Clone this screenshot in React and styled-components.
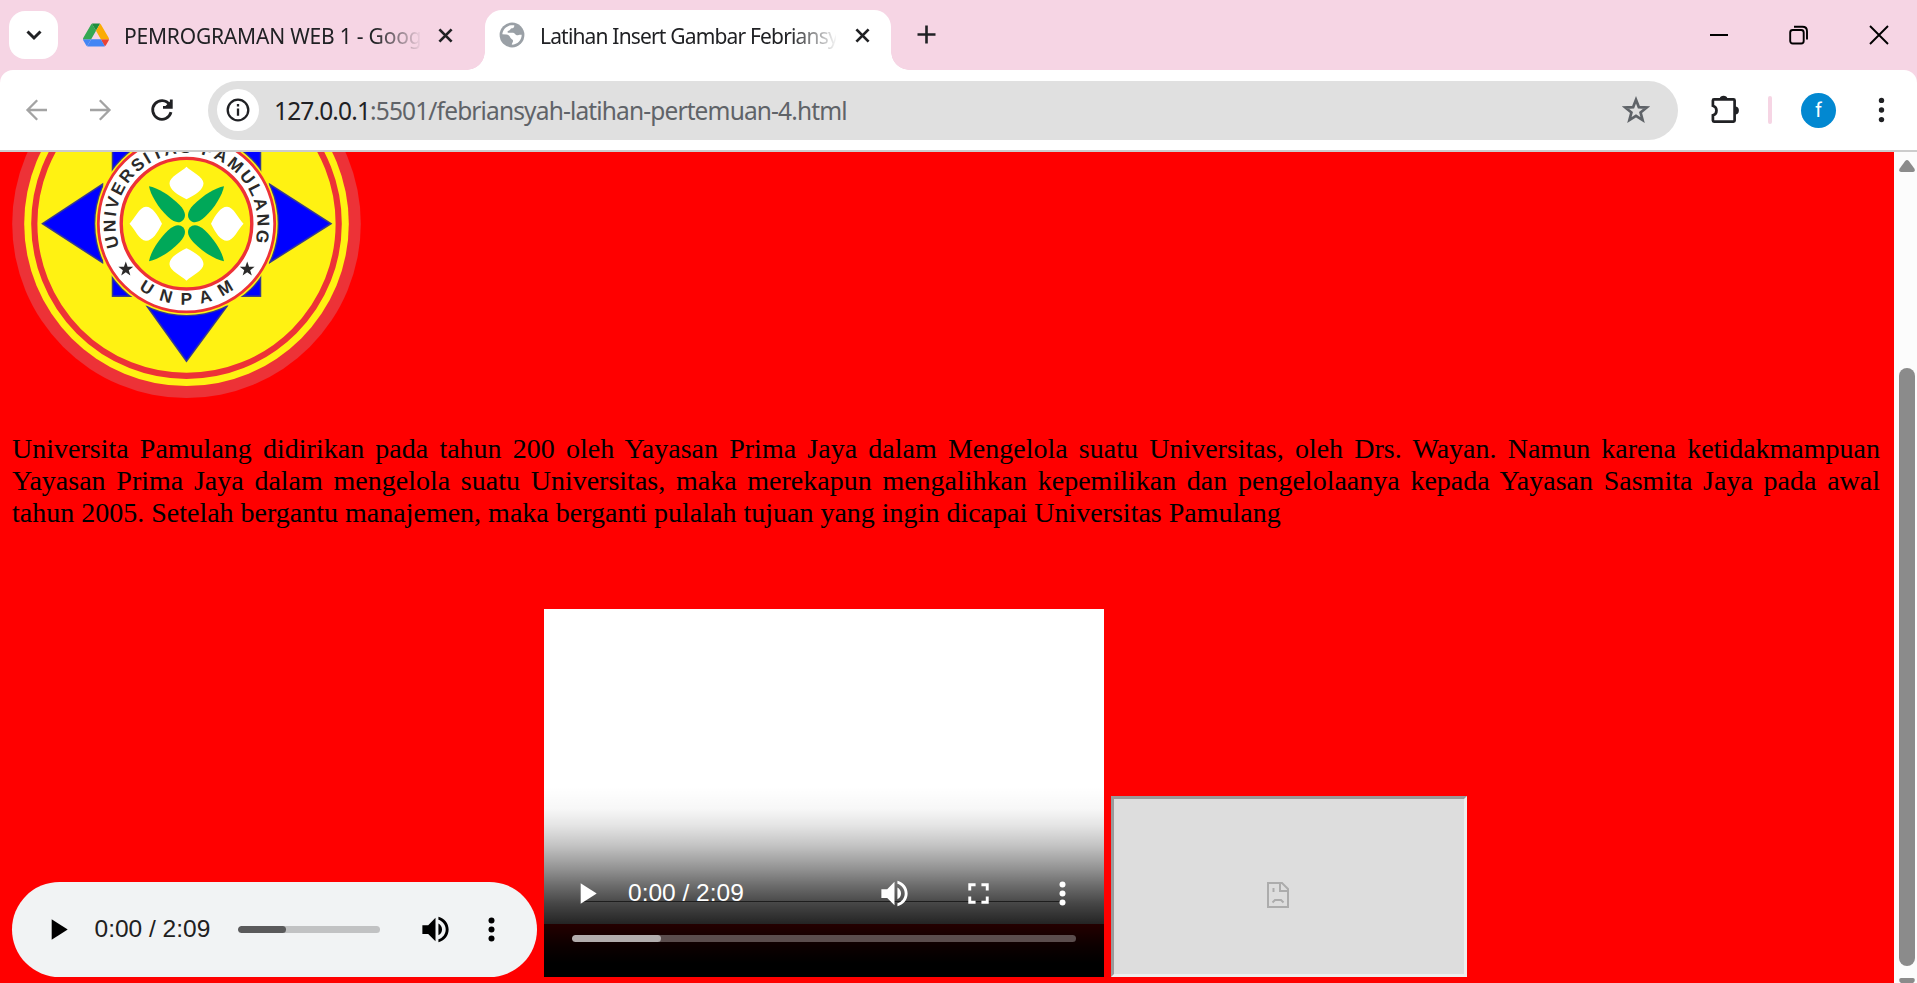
import React from "react";
import styled, { createGlobalStyle } from "styled-components";

const Global = createGlobalStyle`
  * { box-sizing: border-box; }
  html, body { margin: 0; padding: 0; overflow: hidden; }
  svg { display: block; flex: none; }
`;

const Window = styled.div`
  width: 1917px;
  height: 983px;
  display: flex;
  flex-direction: column;
  overflow: hidden;
  background: #f6d5e4;
  font-family: "Noto Sans", "Open Sans", sans-serif;
`;

const TabStrip = styled.div`
  height: 70px;
  flex: none;
  display: flex;
  align-items: flex-start;
  padding-left: 9px;
`;

const TabSearch = styled.button`
  width: 49px;
  height: 48px;
  margin-top: 11px;
  border: 0;
  padding: 0;
  border-radius: 16px;
  background: #fff;
  display: grid;
  place-items: center;
`;

const Tab = styled.div`
  position: relative;
  display: flex;
  align-items: center;
  width: ${(p) => p.$width}px;
  height: 60px;
  margin-top: 10px;
  padding: 0 ${(p) => p.$padRight}px 10px ${(p) => p.$padLeft}px;
  background: ${(p) => (p.$active ? "#fff" : "transparent")};
  border-radius: 17px 17px 0 0;
  ${(p) =>
    p.$active &&
    `
    &::before, &::after {
      content: "";
      position: absolute;
      bottom: 0;
      width: 18px;
      height: 18px;
    }
    &::before {
      left: -18px;
      background: radial-gradient(circle at 0 0, transparent 17.5px, #fff 18px);
    }
    &::after {
      right: -18px;
      background: radial-gradient(circle at 100% 0, transparent 17.5px, #fff 18px);
    }
  `}
`;

const TabTitle = styled.span`
  width: 296px;
  margin: 2px auto 0 15px;
  font-size: 21px;
  line-height: 30px;
  letter-spacing: ${(p) => p.$spacing}px;
  white-space: nowrap;
  color: #202124;
  mask-image: linear-gradient(to right, #000 250px, transparent 298px);
`;

const NewTab = styled.div`
  margin: 25px 0 0 26px;
`;

const WindowButtons = styled.div`
  margin-left: auto;
  padding: 25px 28px 0 0;
  display: flex;
  gap: 60px;
`;

const Toolbar = styled.div`
  height: 82px;
  flex: none;
  display: flex;
  align-items: center;
  padding: 0 31px 0 24px;
  background: #fff;
  border-bottom: 2px solid #ccc;
  border-radius: 13px 13px 0 0;
`;

const NavButtons = styled.div`
  display: flex;
  gap: 36.5px;
  width: 184px;
`;

const AddressBar = styled.div`
  width: 1470px;
  height: 59px;
  border-radius: 30px;
  background: #e0e0e0;
  display: flex;
  align-items: center;
  padding: 0 28px 0 9px;
`;

const SiteInfo = styled.span`
  width: 42px;
  height: 42px;
  border-radius: 50%;
  background: #fff;
  display: grid;
  place-items: center;
`;

const Url = styled.span`
  margin: 2px auto 0 15px;
  font-size: 24.5px;
  line-height: 34px;
  letter-spacing: -0.86px;
  white-space: nowrap;
  color: #5f6368;
`;

const Host = styled.span`
  color: #202124;
`;

const ToolbarEnd = styled.div`
  flex: 1;
  display: flex;
  align-items: center;
  padding-left: 32px;
`;

const Divider = styled.span`
  width: 4px;
  height: 28px;
  border-radius: 2px;
  margin-left: 28px;
  background: #f6d5e4;
`;

const Avatar = styled.span`
  width: 35px;
  height: 35px;
  border-radius: 50%;
  margin: 0 auto 0 29px;
  background: #0288d1;
  color: #fff;
  font: 20px/35px Roboto, sans-serif;
  text-align: center;
`;

const Viewport = styled.div`
  flex: 1;
  min-height: 0;
  display: flex;
`;

const Page = styled.main`
  width: 1894px;
  padding: 0 14px 0 12px;
  background: #f00;
  overflow: hidden;
`;

const Paragraph = styled.p`
  margin: 34px 0 80px;
  font: 28px/32px "Liberation Serif", "Times New Roman", serif;
  text-align: justify;
  color: #000;
`;

const MediaRow = styled.div`
  display: flex;
  align-items: flex-end;
  gap: 7px;
`;

const AudioPlayer = styled.div`
  width: 525px;
  height: 95px;
  border-radius: 48px;
  background: #f1f3f4;
  display: flex;
  align-items: center;
  padding: 0 28px 0 28px;
`;

const Time = styled.span`
  font: 24.5px/30px "Liberation Sans", Arial, sans-serif;
  white-space: nowrap;
  color: ${(p) => (p.$light ? "#fff" : "#202020")};
`;

const AudioTime = styled(Time)`
  margin: 0 27.5px 2px 19.5px;
`;

const Track = styled.div`
  width: ${(p) => p.$width}px;
  height: 7px;
  border-radius: 4px;
  overflow: hidden;
  background: ${(p) => p.$rest};
`;

const Buffered = styled.div`
  width: ${(p) => p.$width}px;
  height: 100%;
  border-radius: 4px;
  background: ${(p) => p.$fill};
`;

const AudioButtons = styled.div`
  margin-left: auto;
  display: flex;
  gap: 21px;
`;

const VideoPlayer = styled.div`
  position: relative;
  width: 560px;
  height: 368px;
  display: flex;
  flex-direction: column;
  justify-content: flex-end;
  padding: 0 28px 35px 28px;
  background:
    linear-gradient(
      to bottom,
      rgba(0, 0, 0, 0) 178px,
      rgba(0, 0, 0, 0.03) 200px,
      rgba(0, 0, 0, 0.1) 216px,
      rgba(0, 0, 0, 0.23) 236px,
      rgba(0, 0, 0, 0.42) 259px,
      rgba(0, 0, 0, 0.58) 277px,
      rgba(0, 0, 0, 0.73) 295px,
      rgba(0, 0, 0, 0.86) 315px,
      rgba(0, 0, 0, 0.95) 336px,
      rgba(0, 0, 0, 1) 354px
    ),
    linear-gradient(to bottom, #fff 315px, #f00 315px);
`;

const Hairline = styled.span`
  position: absolute;
  left: 38px;
  right: 42px;
  top: 292px;
  height: 1px;
  background: #1e1e1e;
`;

const VideoControls = styled.div`
  position: relative;
  height: 35px;
  display: flex;
  align-items: center;
  margin: 0 -4px 24px -3px;
`;

const VideoTime = styled(Time)`
  margin: 0 auto 2px 24px;
`;

const VideoButtons = styled.div`
  display: flex;
  gap: 49px;
`;

const BrokenFrame = styled.div`
  width: 356px;
  height: 181px;
  border: 3px solid;
  border-color: #9a9a9a #eee #eee #9a9a9a;
  background: #ddd;
  display: grid;
  place-items: center;
  padding: 17px 22px 0 0;
`;

const Scrollbar = styled.div`
  width: 23px;
  height: 831px;
  background: #fcfcfc;
  display: flex;
  flex-direction: column;
  align-items: center;
  padding: 8px 2px 0 5px;
  overflow: hidden;
`;

const Thumb = styled.div`
  width: 16px;
  height: 598px;
  flex: none;
  margin: 196px 0 12px;
  border-radius: 8px;
  background: #8b8b8b;
`;

const CloseX = () => (
  <svg width="15" height="15" viewBox="0 0 16 16" stroke="#202124" strokeWidth="2.9">
    <path d="M1.500 1.500 14.500 14.500M14.500 1.500 1.500 14.500" />
  </svg>
);

const DriveIcon = () => (
  <svg width="26" height="24" viewBox="0 0 87.3 78">
    <path d="m6.6 66.85 3.85 6.65c.8 1.4 1.95 2.5 3.3 3.3l13.75-23.8h-27.5c0 1.55.4 3.1 1.2 4.5z" fill="#4285f4" />
    <path d="m43.65 25-13.75-23.8c-1.35.8-2.5 1.9-3.3 3.3l-25.4 44a9.06 9.06 0 0 0 -1.2 4.5h27.5z" fill="#34a853" />
    <path d="m73.55 76.8c1.35-.8 2.5-1.9 3.3-3.3l1.6-2.75 7.65-13.25c.8-1.4 1.2-2.95 1.2-4.5h-27.5l5.85 11.5z" fill="#ea4335" />
    <path d="m43.65 25 13.75-23.8c-1.35-.8-2.9-1.2-4.5-1.2h-18.5c-1.6 0-3.15.45-4.5 1.2z" fill="#1e8e3e" />
    <path d="m59.8 53h-32.3l-13.75 23.8c1.35.8 2.9 1.2 4.5 1.2h50.8c1.6 0 3.15-.45 4.5-1.2z" fill="#4285f4" />
    <path d="m73.4 26.5-12.7-22c-.8-1.4-1.95-2.5-3.3-3.3l-13.75 23.8 16.15 28h27.45c0-1.55-.4-3.1-1.2-4.5z" fill="#fbac04" />
  </svg>
);

const GlobeIcon = () => (
  <svg width="26" height="26" viewBox="0 0 26 26">
    <circle cx="13" cy="13" r="12.4" fill="#9aa0a6" />
    <path
      d="M3.300 12.200C3.800 7.500 7.500 3.800 12 3.300H15.200C15.600 5.200 14.200 6.200 12.600 6.300C11.200 6.600 11.400 8.400 9.600 8.700C8 9 8.300 10.800 9.600 10.800H14.200C16 11.200 16.200 13.200 17.800 13.300C19.500 13.400 20 12.600 22.700 12.800C22.700 18.200 18.500 22.600 12.800 22.700C12.800 20.800 14.200 20.200 14 18.600C13.800 17.200 12 17.200 11.400 15.800C10.800 14 9.500 12.800 7.500 12.600Z"
      fill="#fff"
    />
  </svg>
);

const Arrow = ({ flip }) => (
  <svg width="26" height="26" viewBox="0 0 26 26" fill="none" stroke="#a3a3a3" strokeWidth="2.3">
    <path
      transform={flip ? "matrix(-1 0 0 1 26 0)" : undefined}
      d="M23 13H4M13.200 3.300 3.500 13 13.200 22.700"
    />
  </svg>
);

const ReloadIcon = () => (
  <svg width="26" height="26" viewBox="0 0 26 26" fill="none" stroke="#202124" strokeWidth="2.8">
    <path d="M22 15.200A9.300 9.300 0 1 1 20.600 7.600" />
    <path d="M22.300 2.400V10.300H14" />
    <path d="M16.500 8.900H21V4.500Z" fill="#202124" stroke="none" />
  </svg>
);

const Dots = ({ color, r = 3, step = 9, width = 35, height = 35 }) => (
  <svg width={width} height={height} fill={color}>
    {[-1, 0, 1].map((n) => (
      <circle key={n} cx={width / 2} cy={height / 2 + n * step} r={r} />
    ))}
  </svg>
);

const PuzzleIcon = () => (
  <svg width="30" height="30" viewBox="0 0 30 30">
    <path
      d="M4 4.300H23.500Q24.600 4.300 24.600 5.400V25.500Q24.600 26.600 23.500 26.600H4Q2.900 26.600 2.900 25.500V20.300A5 5 0 0 0 2.900 10.700V5.400Q2.900 4.300 4 4.300Z"
      fill="none"
      stroke="#202124"
      strokeWidth="2.700"
    />
    <path d="M9.700 3.500A3.900 3.300 0 0 1 17.400 3.500ZM25 11.400A3.900 4 0 0 1 25 19.400Z" fill="#202124" />
  </svg>
);

const Play = ({ color }) => (
  <svg width="35" height="35" viewBox="0 0 24 24" fill={color}>
    <path d="M8 5v14l11-7z" />
  </svg>
);

const Volume = ({ color }) => (
  <svg width="35" height="35" viewBox="0 0 24 24" fill={color}>
    <path d="M3 9v6h4l5 5V4L7 9H3zm13.500 3c0-1.770-1.020-3.290-2.500-4.030v8.050c1.480-.730 2.500-2.250 2.500-4.020zM14 3.230v2.060c2.890.860 5 3.540 5 6.710s-2.110 5.850-5 6.710v2.060c4.010-.910 7-4.490 7-8.770s-2.990-7.860-7-8.770z" />
  </svg>
);

const Fullscreen = () => (
  <svg width="35" height="35" viewBox="0 0 24 24" fill="#fff">
    <path d="M7 14H5v5h5v-2H7v-3zm-2-4h2V7h3V5H5v5zm12 7h-3v2h5v-5h-2v3zM14 5v2h3v3h2V5h-5z" />
  </svg>
);

const SadPage = () => (
  <svg width="22" height="26" viewBox="0 0 22 26" fill="none" stroke="#acacac" strokeWidth="2">
    <path d="M15 1H1V25H21V7Z" />
    <path d="M13 1V9H21" />
    <path d="M6.500 6V10" />
    <path d="M5.500 20.500 8 18H14L16.500 20.500" />
  </svg>
);

const starPoints = (cx, cy, r, inner = 0.4) =>
  Array.from({ length: 10 }, (_, i) => {
    const a = (Math.PI / 5) * i - Math.PI / 2;
    const k = i % 2 ? r * inner : r;
    return `${cx + k * Math.cos(a)},${cy + k * Math.sin(a)}`;
  }).join(" ");

const Crest = () => (
  <svg width="350" height="247" viewBox="-174.5 -71.7 350 247">
    <defs>
      <path id="arcTop" d="M-67.300 22.800A71 71 0 1 1 67.900 21" />
      <path id="arcBottom" d="M-47.800 65.400A81 81 0 0 0 47.800 65.400" />
      <clipPath id="blueShapes">
        <path d="M-74.500 -74H74.500V73H-74.500ZM-144.500 0 -84 -40V40ZM144.500 0 83 -40V40ZM0 138.500 -40 82H41Z" />
      </clipPath>
    </defs>
    <circle r="174.300" fill="#ed3237" />
    <circle r="162.300" fill="#fff212" />
    <circle r="152.200" fill="none" stroke="#ed3237" strokeWidth="6.200" />
    <g fill="#00f" stroke="#373b8c" strokeWidth="1.500">
      <rect x="-74" y="-74" width="148" height="146.500" />
      <path d="M-144 0 -84 -39.500V39ZM144.500 0 83 -39.500V39ZM0 137.500 -39.500 82.500H40.500Z" />
    </g>
    <circle r="92.500" fill="#373b8c" clipPath="url(#blueShapes)" />
    <circle r="91.200" fill="#fff212" />
    <circle r="88.200" fill="#fff" stroke="#ed3237" strokeWidth="2.800" />
    <circle r="65.300" fill="#fff212" stroke="#ed3237" strokeWidth="3.400" />
    {[0, 90, 180, 270].map((a) => (
      <g key={a} transform={`rotate(${a})`}>
        <path
          d="M0 -57C5 -52 17 -47 17 -40.500C17 -34 9 -29 0 -24.500C-9 -29 -17 -34 -17 -40.500C-17 -47 -5 -52 0 -57Z"
          fill="#fff"
        />
        <path
          transform="rotate(45)"
          d="M0 -53C5 -46 8.500 -32 8.300 -18C8 -8 4 -5 0 -5C-4 -5 -8 -8 -8.300 -18C-8.500 -32 -5 -46 0 -53Z"
          fill="#00a859"
        />
      </g>
    ))}
    <g fill="#2b2a29" fontFamily="Liberation Sans, Arial, sans-serif" fontWeight="700" fontSize="17.200">
      <text>
        <textPath href="#arcTop" textLength="264" lengthAdjust="spacing">UNIVERSITAS PAMULANG</textPath>
      </text>
      <text>
        <textPath href="#arcBottom" textLength="102" lengthAdjust="spacing">UNPAM</textPath>
      </text>
      <polygon points={starPoints(-60.700, 45.500, 7.800)} />
      <polygon points={starPoints(60.700, 45.500, 7.800)} />
    </g>
  </svg>
);

export default function App() {
  return (
    <Window>
      <Global />
      <TabStrip>
        <TabSearch>
          <svg width="16" height="12" viewBox="0 0 16 12" fill="none" stroke="#202124" strokeWidth="3">
            <path d="M1.500 2.500 8 9 14.500 2.500" />
          </svg>
        </TabSearch>
        <Tab $width={427} $padLeft={25} $padRight={32}>
          <DriveIcon />
          <TabTitle $spacing={-0.2}>PEMROGRAMAN WEB 1 - Goog</TabTitle>
          <CloseX />
        </Tab>
        <Tab $active $width={406} $padLeft={14} $padRight={21}>
          <GlobeIcon />
          <TabTitle $spacing={-0.83}>Latihan Insert Gambar Febriansy</TabTitle>
          <CloseX />
        </Tab>
        <NewTab>
          <svg width="19" height="19" viewBox="0 0 19 19" stroke="#202124" strokeWidth="2.600">
            <path d="M9.500 .5V18.500M.5 9.500H18.500" />
          </svg>
        </NewTab>
        <WindowButtons>
          <svg width="20" height="20" viewBox="0 0 20 20" stroke="#000" strokeWidth="2">
            <path d="M1 10H19" />
          </svg>
          <svg width="20" height="20" viewBox="0 0 20 20" fill="none" stroke="#000" strokeWidth="1.900">
            <rect x="1.200" y="5" width="13.500" height="13.500" rx="2.500" />
            <path d="M5 1.800H13.500Q18 1.800 18 6.300V14.500" />
          </svg>
          <svg width="20" height="20" viewBox="0 0 20 20" stroke="#000" strokeWidth="1.900">
            <path d="M1 1 19 19M19 1 1 19" />
          </svg>
        </WindowButtons>
      </TabStrip>

      <Toolbar>
        <NavButtons>
          <Arrow />
          <Arrow flip />
          <ReloadIcon />
        </NavButtons>
        <AddressBar>
          <SiteInfo>
            <svg width="24" height="24" viewBox="0 0 24 24" fill="none" stroke="#202124" strokeWidth="2.300">
              <circle cx="12" cy="12" r="10.300" />
              <path d="M12 10.500V17.800M12 6V8.500" />
            </svg>
          </SiteInfo>
          <Url>
            <Host>127.0.0.1</Host>:5501/febriansyah-latihan-pertemuan-4.html
          </Url>
          <svg width="28" height="28" viewBox="0 0 28 28" fill="none" stroke="#5f6368" strokeWidth="2.700">
            <polygon points={starPoints(14, 15, 11.200, 0.43)} />
          </svg>
        </AddressBar>
        <ToolbarEnd>
          <PuzzleIcon />
          <Divider />
          <Avatar>f</Avatar>
          <Dots color="#202124" r={2.7} step={9.6} width={9} height={26} />
        </ToolbarEnd>
      </Toolbar>

      <Viewport>
        <Page>
          <Crest />
          <Paragraph>
            Universita Pamulang didirikan pada tahun 200 oleh Yayasan Prima Jaya dalam Mengelola suatu
            Universitas, oleh Drs. Wayan. Namun karena ketidakmampuan Yayasan Prima Jaya dalam mengelola
            suatu Universitas, maka merekapun mengalihkan kepemilikan dan pengelolaanya kepada Yayasan
            Sasmita Jaya pada awal tahun 2005. Setelah bergantu manajemen, maka berganti pulalah tujuan
            yang ingin dicapai Universitas Pamulang
          </Paragraph>
          <MediaRow>
            <AudioPlayer>
              <Play color="#000" />
              <AudioTime>0:00 / 2:09</AudioTime>
              <Track $width={142} $rest="#c1c2c3">
                <Buffered $width={48} $fill="#5a5a5b" />
              </Track>
              <AudioButtons>
                <Volume color="#000" />
                <Dots color="#000" />
              </AudioButtons>
            </AudioPlayer>
            <VideoPlayer>
              <Hairline />
              <VideoControls>
                <Play color="#fff" />
                <VideoTime $light>0:00 / 2:09</VideoTime>
                <VideoButtons>
                  <Volume color="#fff" />
                  <Fullscreen />
                  <Dots color="#fff" />
                </VideoButtons>
              </VideoControls>
              <Track $width={504} $rest="#5b4d4d">
                <Buffered $width={89} $fill="#b3adad" />
              </Track>
            </VideoPlayer>
            <BrokenFrame>
              <SadPage />
            </BrokenFrame>
          </MediaRow>
        </Page>
        <Scrollbar>
          <svg width="16" height="12" viewBox="0 0 16 12" fill="#8b8b8b">
            <path d="M6.200 1Q8 -.8 9.800 1L15.500 8.800Q16.500 12 14 12H2Q-.5 12 .5 8.800Z" />
          </svg>
          <Thumb />
          <svg width="16" height="12" viewBox="0 0 16 12" fill="#8b8b8b">
            <path d="M6.200 11Q8 12.800 9.800 11L15.500 3.200Q16.500 0 14 0H2Q-.5 0 .5 3.200Z" />
          </svg>
        </Scrollbar>
      </Viewport>
    </Window>
  );
}
